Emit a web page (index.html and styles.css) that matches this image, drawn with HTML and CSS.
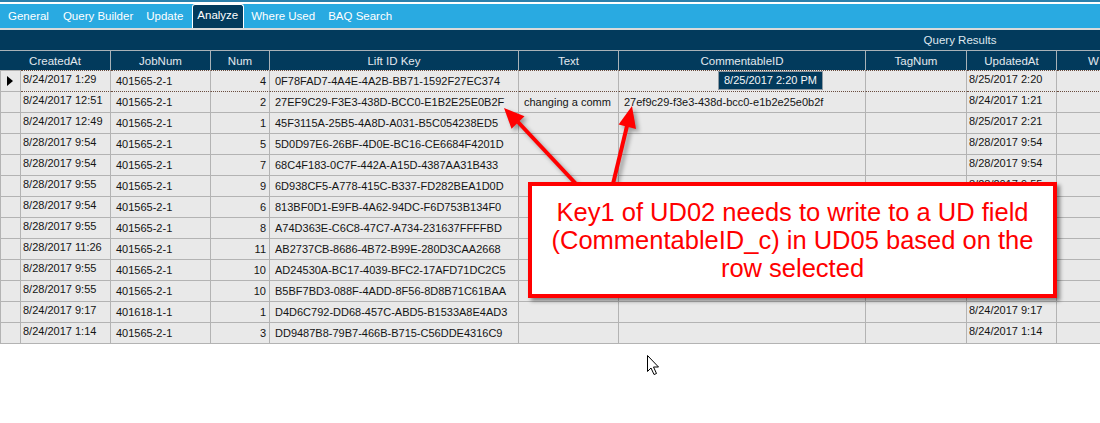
FILE: index.html
```html
<!DOCTYPE html>
<html>
<head>
<meta charset="utf-8">
<link rel="stylesheet" href="styles.css">
</head>
<body>
<div class="page">
  <div class="topline"></div>
  <div class="gapline"></div>
  <nav class="tabs">
    <span class="tab">General</span>
    <span class="tab">Query Builder</span>
    <span class="tab">Update</span>
    <span class="tab active">Analyze</span>
    <span class="tab">Where Used</span>
    <span class="tab">BAQ Search</span>
  </nav>
  <div class="sepline"></div>
  <div class="grid">
    <div class="caption">Query Results</div>
    <table class="data">
      <colgroup>
        <col class="c-rh"><col class="c-created"><col class="c-job"><col class="c-num"><col class="c-lift"><col class="c-text"><col class="c-comm"><col class="c-tag"><col class="c-upd"><col class="c-w"><col class="c-fill">
      </colgroup>
      <thead>
        <tr>
          <th colspan="2">CreatedAt</th><th>JobNum</th><th>Num</th><th>Lift ID Key</th><th>Text</th><th>CommentableID</th><th>TagNum</th><th>UpdatedAt</th><th class="wcol">W</th><th></th>
        </tr>
      </thead>
      <tbody>
        <tr class="focus"><td class="rh"><span class="tri"></span></td><td class="date">8/24/2017 1:29</td><td>401565-2-1</td><td class="num">4</td><td>0F78FAD7-4A4E-4A2B-BB71-1592F27EC374</td><td></td><td></td><td></td><td class="date">8/25/2017 2:20</td><td></td><td></td></tr>
        <tr><td class="rh"></td><td class="date">8/24/2017 12:51</td><td>401565-2-1</td><td class="num">2</td><td>27EF9C29-F3E3-438D-BCC0-E1B2E25E0B2F</td><td>changing a comm</td><td>27ef9c29-f3e3-438d-bcc0-e1b2e25e0b2f</td><td></td><td class="date">8/24/2017 1:21</td><td></td><td></td></tr>
        <tr><td class="rh"></td><td class="date">8/24/2017 12:49</td><td>401565-2-1</td><td class="num">1</td><td>45F3115A-25B5-4A8D-A031-B5C054238ED5</td><td></td><td></td><td></td><td class="date">8/25/2017 2:21</td><td></td><td></td></tr>
        <tr><td class="rh"></td><td class="date">8/28/2017 9:54</td><td>401565-2-1</td><td class="num">5</td><td>5D0D97E6-26BF-4D0E-BC16-CE6684F4201D</td><td></td><td></td><td></td><td class="date">8/28/2017 9:54</td><td></td><td></td></tr>
        <tr><td class="rh"></td><td class="date">8/28/2017 9:54</td><td>401565-2-1</td><td class="num">7</td><td>68C4F183-0C7F-442A-A15D-4387AA31B433</td><td></td><td></td><td></td><td class="date">8/28/2017 9:54</td><td></td><td></td></tr>
        <tr><td class="rh"></td><td class="date">8/28/2017 9:55</td><td>401565-2-1</td><td class="num">9</td><td>6D938CF5-A778-415C-B337-FD282BEA1D0D</td><td></td><td></td><td></td><td class="date">8/28/2017 9:55</td><td></td><td></td></tr>
        <tr><td class="rh"></td><td class="date">8/28/2017 9:54</td><td>401565-2-1</td><td class="num">6</td><td>813BF0D1-E9FB-4A62-94DC-F6D753B134F0</td><td></td><td></td><td></td><td class="date"></td><td></td><td></td></tr>
        <tr><td class="rh"></td><td class="date">8/28/2017 9:55</td><td>401565-2-1</td><td class="num">8</td><td>A74D363E-C6C8-47C7-A734-231637FFFFBD</td><td></td><td></td><td></td><td class="date"></td><td></td><td></td></tr>
        <tr><td class="rh"></td><td class="date">8/28/2017 11:26</td><td>401565-2-1</td><td class="num">11</td><td>AB2737CB-8686-4B72-B99E-280D3CAA2668</td><td></td><td></td><td></td><td class="date"></td><td></td><td></td></tr>
        <tr><td class="rh"></td><td class="date">8/28/2017 9:55</td><td>401565-2-1</td><td class="num">10</td><td>AD24530A-BC17-4039-BFC2-17AFD71DC2C5</td><td></td><td></td><td></td><td class="date"></td><td></td><td></td></tr>
        <tr><td class="rh"></td><td class="date">8/28/2017 9:55</td><td>401565-2-1</td><td class="num">10</td><td>B5BF7BD3-088F-4ADD-8F56-8D8B71C61BAA</td><td></td><td></td><td></td><td class="date"></td><td></td><td></td></tr>
        <tr><td class="rh"></td><td class="date">8/24/2017 9:17</td><td>401618-1-1</td><td class="num">1</td><td>D4D6C792-DD68-457C-ABD5-B1533A8E4AD3</td><td></td><td></td><td></td><td class="date">8/24/2017 9:17</td><td></td><td></td></tr>
        <tr><td class="rh"></td><td class="date">8/24/2017 1:14</td><td>401565-2-1</td><td class="num">3</td><td>DD9487B8-79B7-466B-B715-C56DDE4316C9</td><td></td><td></td><td></td><td class="date">8/24/2017 1:14</td><td></td><td></td></tr>
      </tbody>
    </table>
  </div>

  <div class="tooltip">8/25/2017 2:20 PM</div>

  <svg class="arrows" width="1100" height="423" viewBox="0 0 1100 423">
    <g class="arrowset">
      <line x1="578" y1="186" x2="518" y2="122" stroke="#ff0000" stroke-width="4"/>
      <polygon points="504,108 524.5,116.2 511.5,128.8" fill="#ff0000"/>
      <line x1="612" y1="188" x2="627" y2="126" stroke="#ff0000" stroke-width="4"/>
      <polygon points="632,106 636,129 618.6,124.6" fill="#ff0000"/>
    </g>
  </svg>

  <div class="note">
    Key1 of UD02 needs to write to a UD field (CommentableID_c) in UD05 based on the row selected
  </div>

  <svg class="cursor" width="14" height="22" viewBox="0 0 14 22">
    <path d="M1.5,1.5 L1.5,17.5 L5,14 L8,20.5 L10.5,19.5 L7.5,13 L12.5,13 Z" fill="#ffffff" stroke="#000000" stroke-width="1" stroke-linejoin="miter"/>
  </svg>
</div>
</body>
</html>
```

FILE: styles.css
```css
html, body {
  margin: 0;
  padding: 0;
  background: #ffffff;
}

body {
  width: 1100px;
  height: 423px;
  overflow: hidden;
  font-family: "Liberation Sans", Arial, sans-serif;
}

.page {
  position: relative;
  width: 1100px;
  height: 423px;
  overflow: hidden;
}

.topline {
  height: 2px;
  background: #2b80ac;
}

.gapline {
  height: 2px;
  background: #ffffff;
}

.tabs {
  height: 24px;
  background: #29aae1;
  display: flex;
  align-items: flex-end;
  padding-left: 2px;
  box-sizing: border-box;
}

.tab {
  color: #ffffff;
  font-size: 11.5px;
  padding: 0 6px 5px 6px;
  line-height: 14px;
  margin-right: 1px;
}

.tab:nth-child(2) { margin-left: 1px; }

.tab.active {
  background: #023a5c;
  border: 1px solid #ffffff;
  border-bottom: none;
  border-radius: 3px 3px 0 0;
  padding: 3px 5px 5px 4px;
  line-height: 14px;
  margin-left: 2px;
  margin-right: 1px;
  height: 15px;
}

.sepline {
  height: 2px;
  background: #dadada;
}

.grid {
  width: 1920px;
}

.caption {
  height: 20px;
  background: #023a5c;
  color: #dfe7ee;
  font-size: 11.5px;
  line-height: 20px;
  text-align: center;
}

.data {
  border-collapse: separate;
  border-spacing: 0;
  table-layout: fixed;
  width: 1920px;
  font-size: 11px;
}

.c-rh { width: 21px; }
.c-created { width: 90px; }
.c-job { width: 100px; }
.c-num { width: 59px; }
.c-lift { width: 249px; }
.c-text { width: 100px; }
.c-comm { width: 247px; }
.c-tag { width: 101px; }
.c-upd { width: 90px; }
.c-w { width: 124px; }
.c-fill { width: auto; }

.data th {
  box-sizing: border-box;
  height: 20px;
  padding: 0;
  background: #023a5c;
  color: #e2e9ef;
  font-weight: normal;
  font-size: 11.5px;
  text-align: center;
  border-top: 1px solid #a9b2b8;
  border-right: 1px solid #a9b2b8;
  white-space: nowrap;
  overflow: hidden;
}

.data th.wcol {
  text-align: left;
  padding-left: 31px;
}

.data td {
  box-sizing: border-box;
  height: 21px;
  padding: 0 0 0 5px;
  background: #e9e9e9;
  color: #141414;
  border-right: 1px solid #b3b3b3;
  border-bottom: 1px solid #b3b3b3;
  white-space: nowrap;
  overflow: hidden;
  line-height: 18px;
  vertical-align: middle;
}

.data td.rh {
  border-left: 1px solid #b3b3b3;
  padding: 0;
  position: relative;
}

.data td.date {
  padding-left: 2px;
  vertical-align: top;
  padding-top: 0;
  line-height: 17px;
}

.data td.num {
  text-align: right;
  padding: 0 3px 0 0;
}

.data tr.focus td {
  height: 22px;
  border-top: 1px dotted #6a4c3e;
  border-bottom: 1px dotted #6a4c3e;
}

.data tr.focus td.rh {
  border-top: 1px solid #b3b3b3;
  border-bottom: 1px solid #b3b3b3;
}

.tri {
  display: block;
  width: 0;
  height: 0;
  margin-left: 6px;
  border-top: 5px solid transparent;
  border-bottom: 5px solid transparent;
  border-left: 6px solid #000000;
}

.tooltip {
  position: absolute;
  left: 718px;
  top: 71px;
  width: 105px;
  height: 19px;
  box-sizing: border-box;
  background: #023a5c;
  border: 1px solid #8e9aa3;
  color: #f4f6f8;
  font-size: 11px;
  line-height: 17px;
  padding-left: 5px;
}

.arrows {
  position: absolute;
  left: 0;
  top: 0;
  pointer-events: none;
  filter: drop-shadow(3px 3px 2px rgba(0, 0, 0, 0.35));
}

.note {
  position: absolute;
  left: 528px;
  top: 182px;
  width: 529px;
  height: 116px;
  box-sizing: border-box;
  border: 4px solid #ff0000;
  background: #ffffff;
  color: #ff0000;
  font-size: 25.5px;
  line-height: 28px;
  text-align: center;
  padding: 12px 8px 0 8px;
  box-shadow: 3px 3px 4px rgba(0, 0, 0, 0.45);
}

.cursor {
  position: absolute;
  left: 646px;
  top: 354px;
}
```
